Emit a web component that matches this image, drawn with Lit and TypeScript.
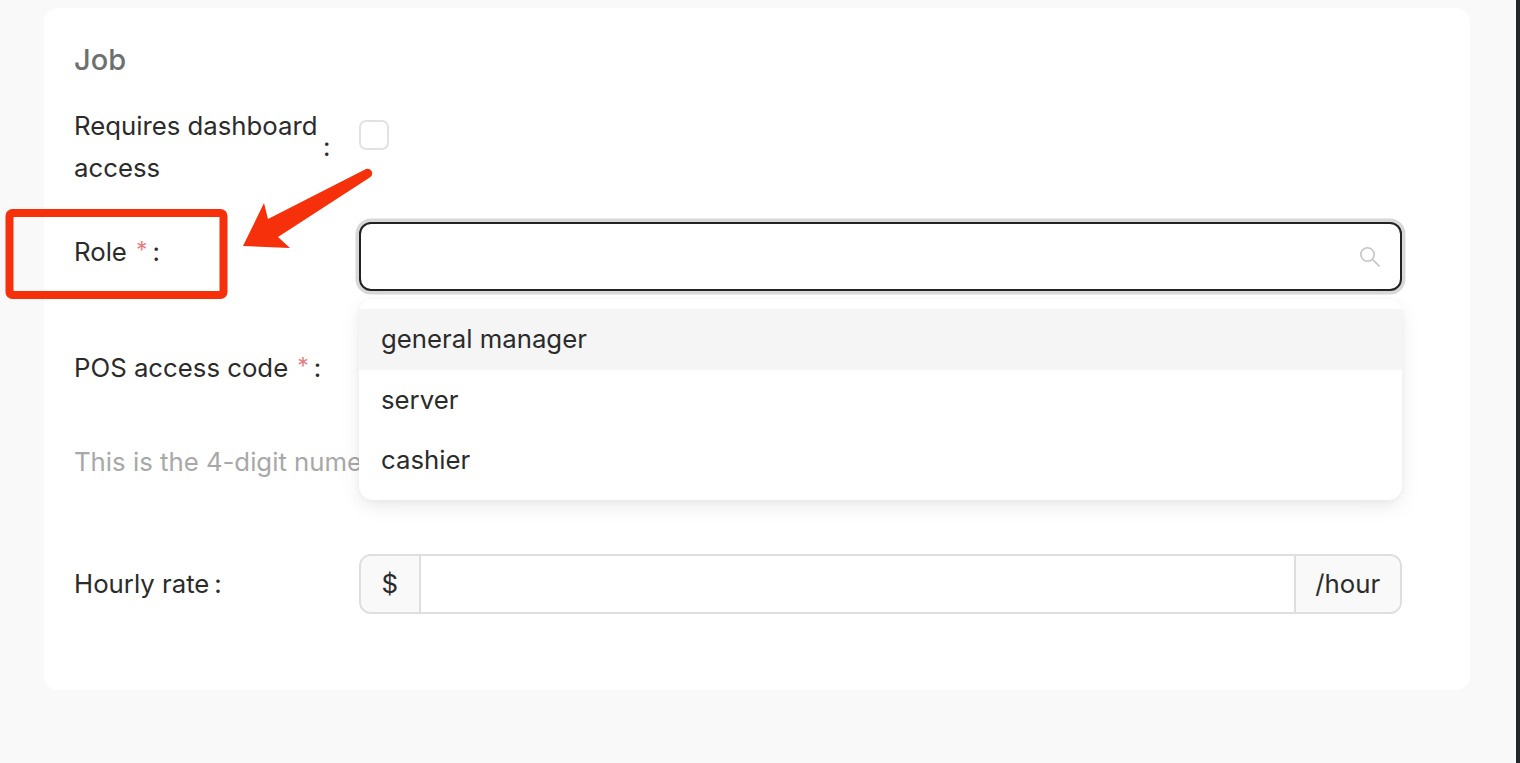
import { LitElement, html, css, svg } from "lit";
import { customElement } from "lit/decorators.js";

/* The watermark repeats on a staggered lattice across the screenshot. */
const marks: [number, number][] = [];
for (let j = -1; j <= 3; j++) {
  for (let i = -1; i <= 4; i++) {
    const x = 177 + i * 508 - j * 15 + (j % 2 !== 0 ? 246 : 0) - (j % 2 !== 0 ? 7 : 0);
    const y = 127 - i * 17 + Math.floor(j / 2) * 505 + (j % 2 !== 0 ? 252 : 0);
    if (x > 60 && x < 1480 && y > 80 && y < 690) marks.push([x, y]);
  }
}

@customElement("app-root")
export class AppRoot extends LitElement {
  static styles = css`
    :host {
      display: block;
      position: relative;
      width: 1520px;
      height: 763px;
      overflow: hidden;
      background: #f9f9f9;
      font-family: Inter, "Liberation Sans", sans-serif;
      font-size: 25.75px;
      color: #2b2b2b;
    }
    .page {
      box-sizing: border-box;
      width: 1516px;
      height: 763px;
      padding: 8px 46px 0 44px;
    }
    .edge {
      position: absolute;
      top: 0;
      right: 0;
      width: 4px;
      height: 763px;
      background: #22282b;
    }
    .card {
      box-sizing: border-box;
      height: 682px;
      background: #fff;
      border-radius: 14px;
      padding: 30px 68px 0 30px;
    }
    .title {
      font-size: 29px;
      line-height: 44px;
      color: #6f6f6f;
      font-weight: 500;
      height: 44px;
      margin-bottom: 23px;
    }
    .row {
      display: grid;
      grid-template-columns: 285px 1fr;
    }
    .label {
      display: flex;
      align-items: center;
      line-height: 42px;
    }
    .label .wrap {
      width: 247px;
    }
    .colon {
      margin-left: 5px;
    }
    .label .wrap + .colon {
      margin-left: 2px;
    }
    .star {
      color: #e57f7f;
      margin-left: 9px;
      font-size: 23px;
      line-height: 1;
      margin-top: -4px;
    }
    .r1 {
      height: 84px;
      margin-bottom: 33px;
    }
    .check {
      box-sizing: border-box;
      width: 30px;
      height: 30px;
      margin-top: 15px;
      border: 2px solid #e2e2e2;
      border-radius: 7px;
      background: #fff;
    }
    .r2 {
      height: 69px;
      margin-bottom: 47px;
    }
    .r2 .label,
    .r3 .label {
      height: 60px;
    }
    .select {
      box-sizing: border-box;
      height: 69px;
      background: #fff;
      border: 2px solid #222;
      border-radius: 12px;
      box-shadow: 0 0 0 3.5px #d8d8d8;
      display: flex;
      align-items: center;
      justify-content: flex-end;
      padding-right: 20px;
    }
    .r3 {
      height: 60px;
      margin-bottom: 43px;
    }
    .input {
      box-sizing: border-box;
      height: 60px;
      border: 2px solid #dedede;
      border-radius: 12px;
    }
    .help {
      color: #a8a8a8;
      line-height: 42px;
      height: 42px;
      margin-bottom: 70.5px;
    }
    .r4 {
      height: 60px;
    }
    .group {
      box-sizing: border-box;
      height: 60px;
      border: 2px solid #dedede;
      border-radius: 12px;
      display: flex;
      overflow: hidden;
    }
    .addon {
      box-sizing: border-box;
      background: #f9f9f9;
      display: flex;
      align-items: center;
      justify-content: center;
    }
    .addon.pre {
      width: 59.5px;
      border-right: 2px solid #dedede;
    }
    .addon.post {
      width: 106.5px;
      border-left: 2px solid #dedede;
    }
    .field {
      flex: 1;
      background: #fff;
    }
    .menu {
      position: absolute;
      left: 359px;
      top: 299px;
      width: 1043px;
      height: 201px;
      box-sizing: border-box;
      padding-top: 10px;
      background: #fff;
      border-radius: 14px;
      box-shadow: 0 7px 20px rgba(0, 0, 0, 0.08), 0 2px 6px rgba(0, 0, 0, 0.04);
    }
    .item {
      height: 60.5px;
      line-height: 60.5px;
      padding-left: 22px;
    }
    .item.on {
      background: #f5f5f5;
    }
    .mark {
      position: absolute;
      width: max-content;
      transform: translate(-50%, -50%) rotate(-45deg);
      font-size: 29px;
      line-height: 34px;
      text-align: center;
      color: rgba(0, 0, 0, 0.016);
      white-space: nowrap;
      pointer-events: none;
    }
    .note {
      position: absolute;
      left: 0;
      top: 0;
      pointer-events: none;
    }
  `;

  render() {
    return html`
      <div class="page">
        <div class="card">
          <div class="title">Job</div>
          <div class="row r1">
            <div class="label">
              <span class="wrap">Requires dashboard access</span><span class="colon">:</span>
            </div>
            <div><div class="check"></div></div>
          </div>
          <div class="row r2">
            <div class="label">Role<span class="star">*</span><span class="colon">:</span></div>
            <div class="select">
              <svg width="20" height="20" viewBox="0 0 20 20" fill="none" stroke="#c4c4c4" stroke-width="1.6">
                <circle cx="7.5" cy="7.5" r="6.7"></circle>
                <path d="M12.4 12.4 L19.6 19.4"></path>
              </svg>
            </div>
          </div>
          <div class="row r3">
            <div class="label">POS access code<span class="star">*</span><span class="colon">:</span></div>
            <div class="input"></div>
          </div>
          <div class="help">This is the 4-digit numeric code employees use to clock in</div>
          <div class="row r4">
            <div class="label">Hourly rate<span class="colon">:</span></div>
            <div class="group">
              <div class="addon pre">$</div>
              <div class="field"></div>
              <div class="addon post">/hour</div>
            </div>
          </div>
        </div>
      </div>
      <div class="menu">
        <div class="item on">general manager</div>
        <div class="item">server</div>
        <div class="item">cashier</div>
      </div>
      ${marks.map(
        ([x, y]) => html`<div class="mark" style="left:${x}px;top:${y}px">3BD370180<br />C55C378F30<br />B967826B8C<br />31</div>`
      )}
      <svg class="note" width="1520" height="763" viewBox="0 0 1520 763">
        ${svg`
          <rect x="9.5" y="213" width="214" height="82" rx="3" fill="none" stroke="#f5300b" stroke-width="8"></rect>
          <path d="M372 172 Q373 176 369 178 L278 237 L290 248 L243 246 L264 203 L268 219 L366 169 Q370 168 372 172 Z" fill="#f5300b"></path>
        `}
      </svg>
      <div class="edge"></div>
    `;
  }
}
